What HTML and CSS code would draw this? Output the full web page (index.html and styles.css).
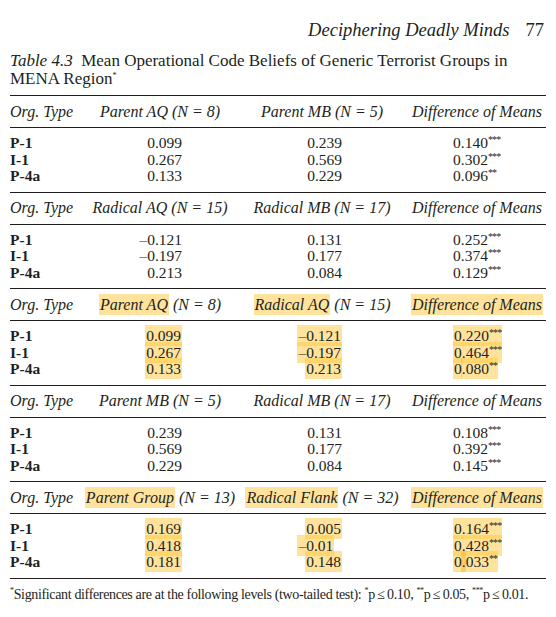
FILE: index.html
```html
<!DOCTYPE html>
<html lang="en">
<head>
  <meta charset="UTF-8">
  <meta name="viewport" content="width=device-width, initial-scale=1.0">
  <title>Table 4.3</title>
  <link rel="stylesheet" href="styles.css">
</head>
<body>
  <div class="page">
    <div class="running">
      <span class="running-title">Deciphering Deadly Minds</span>
      <span class="folio">77</span>
    </div>

    <p class="caption"><i>Table 4.3</i>&nbsp; Mean Operational Code Beliefs of Generic Terrorist Groups in<br>MENA Region<sup class="star">*</sup></p>

    <div class="tbl">
      <!-- parent AQ vs parent MB -->
      <div class="grp">
        <div class="row head">
          <span>Org. Type</span>
          <span>Parent AQ (N = 8)</span>
          <span>Parent MB (N = 5)</span>
          <span>Difference of Means</span>
        </div>
        <div class="body">
          <div class="row"><b>P-1</b><span>0.099</span><span>0.239</span><span>0.140<sup>***</sup></span></div>
          <div class="row"><b>I-1</b><span>0.267</span><span>0.569</span><span>0.302<sup>***</sup></span></div>
          <div class="row"><b>P-4a</b><span>0.133</span><span>0.229</span><span>0.096<sup>**</sup></span></div>
        </div>
      </div>

      <!-- radical AQ vs radical MB -->
      <div class="grp">
        <div class="row head">
          <span>Org. Type</span>
          <span>Radical AQ (N = 15)</span>
          <span>Radical MB (N = 17)</span>
          <span>Difference of Means</span>
        </div>
        <div class="body">
          <div class="row"><b>P-1</b><span>&ndash;0.121</span><span>0.131</span><span>0.252<sup>***</sup></span></div>
          <div class="row"><b>I-1</b><span>&ndash;0.197</span><span>0.177</span><span>0.374<sup>***</sup></span></div>
          <div class="row"><b>P-4a</b><span>0.213</span><span>0.084</span><span>0.129<sup>***</sup></span></div>
        </div>
      </div>

      <!-- parent AQ vs radical AQ -->
      <div class="grp">
        <div class="row head">
          <span>Org. Type</span>
          <span><span class="hl">Parent AQ</span> (N = 8)</span>
          <span><span class="hl">Radical AQ</span> (N = 15)</span>
          <span><span class="hl">Difference of Means</span></span>
        </div>
        <div class="body">
          <div class="row"><b>P-1</b><span><span class="hl">0.099</span></span><span><span class="hl">&ndash;0.121</span></span><span><span class="hl">0.220<sup>***</sup></span></span></div>
          <div class="row"><b>I-1</b><span><span class="hl">0.267</span></span><span><span class="hl">&ndash;0.197</span></span><span><span class="hl">0.464<sup>***</sup></span></span></div>
          <div class="row"><b>P-4a</b><span><span class="hl">0.133</span></span><span><span class="hl">0.213</span></span><span><span class="hl seam">0.080<sup>**</sup></span></span></div>
        </div>
      </div>

      <!-- parent MB vs radical MB -->
      <div class="grp">
        <div class="row head">
          <span>Org. Type</span>
          <span>Parent MB (N = 5)</span>
          <span>Radical MB (N = 17)</span>
          <span>Difference of Means</span>
        </div>
        <div class="body">
          <div class="row"><b>P-1</b><span>0.239</span><span>0.131</span><span>0.108<sup>***</sup></span></div>
          <div class="row"><b>I-1</b><span>0.569</span><span>0.177</span><span>0.392<sup>***</sup></span></div>
          <div class="row"><b>P-4a</b><span>0.229</span><span>0.084</span><span>0.145<sup>***</sup></span></div>
        </div>
      </div>

      <!-- all parents vs all flanks -->
      <div class="grp">
        <div class="row head">
          <span>Org. Type</span>
          <span><span class="hl">Parent Group</span> (N = 13)</span>
          <span><span class="hl">Radical Flank</span> (N = 32)</span>
          <span><span class="hl">Difference of Means</span></span>
        </div>
        <div class="body">
          <div class="row"><b>P-1</b><span><span class="hl">0.169</span></span><span><span class="hl">0.005</span></span><span><span class="hl">0.164<sup>***</sup></span></span></div>
          <div class="row"><b>I-1</b><span><span class="hl">0.418</span></span><span><span class="hl short">&ndash;0.01</span></span><span><span class="hl">0.428<sup>***</sup></span></span></div>
          <div class="row"><b>P-4a</b><span><span class="hl">0.181</span></span><span><span class="hl">0.148</span></span><span><span class="hl seam wide">0.033<sup>**</sup></span></span></div>
        </div>
      </div>
    </div>

    <p class="note"><sup class="star">*</sup>Significant differences are at the following levels (two-tailed test): <sup class="star">*</sup>p&thinsp;&le;&thinsp;0.10, <sup class="star">**</sup>p&thinsp;&le;&thinsp;0.05, <sup class="star">***</sup>p&thinsp;&le;&thinsp;0.01.</p>
  </div>
</body>
</html>
```

FILE: styles.css
```css
body {
  margin: 0;
  background: #fff;
  color: #231f20;
  font-family: "Liberation Serif", "Times New Roman", serif;
}

.page {
  width: 536px;
  padding: 19px 10px 0;
}

/* running head */
.running {
  display: flex;
  justify-content: flex-end;
  gap: 16px;
  padding-right: 2px;
  font-size: 18.5px;
  line-height: 22px;
}

.running-title {
  font-style: italic;
}

.caption {
  margin: 11px 0 0;
  font-size: 17px;
  line-height: 18px;
}

.star {
  font-size: 8px;
  vertical-align: 6px;
  line-height: 0;
}

/* table */
.tbl {
  margin-top: 7px;
  border-bottom: 1px solid #231f20;
}

.grp {
  border-top: 1px solid #231f20;
}

.row {
  display: grid;
  grid-template-columns: 74px 152px 172px 1fr;
  white-space: nowrap;
}

.head {
  height: 31px;
  align-items: center;
  border-bottom: 1px solid #231f20;
  font-size: 16px;
  font-style: italic;
}

.head span {
  text-align: center;
}

.head span:first-child {
  text-align: left;
}

.body {
  padding: 7px 0 7px;
  font-size: 15.5px;
  line-height: 16.5px;
}

.body .row > span:nth-child(2) {
  text-align: right;
  padding-right: 54px;
}

.body .row > span:nth-child(3) {
  text-align: right;
  padding-right: 66px;
}

.body .row > span:nth-child(4) {
  padding-left: 45px;
}

.body sup {
  font-size: 10px;
  line-height: 0;
  vertical-align: 5px;
  letter-spacing: -0.8px;
}

/* highlighter marks */
.hl {
  background: rgba(255, 199, 60, 0.5);
  padding: 2px 1px;
}

.seam {
  background:
    linear-gradient(to right, transparent 8px, rgba(255, 185, 40, 0.55) 8px, rgba(255, 185, 40, 0.55) 9px, transparent 9px),
    rgba(255, 199, 60, 0.5);
}

.seam.wide {
  background:
    linear-gradient(to right, transparent 8px, rgba(255, 185, 40, 0.55) 8px, rgba(255, 185, 40, 0.55) 13px, transparent 13px),
    rgba(255, 199, 60, 0.5);
}

.short {
  margin-right: 0.5em;
}

.note {
  margin: 8px 0 0;
  font-size: 14px;
  line-height: 16px;
  letter-spacing: -0.35px;
}
```
